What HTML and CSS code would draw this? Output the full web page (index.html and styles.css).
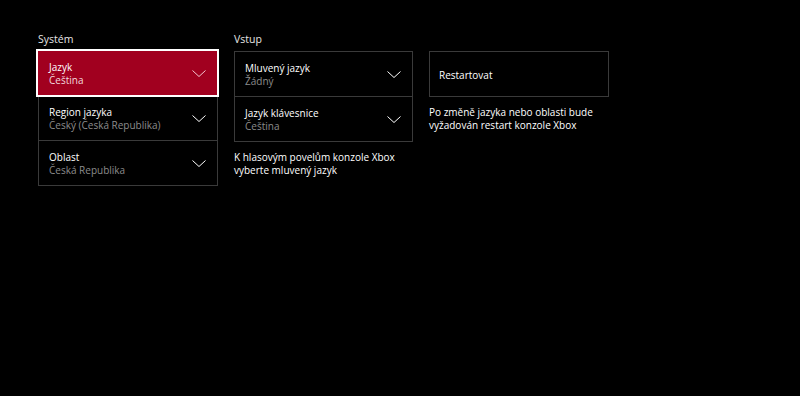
FILE: index.html
```html
<!DOCTYPE html>
<html lang="cs">
<head>
    <meta charset="UTF-8">
    <meta name="viewport" content="width=device-width, initial-scale=1.0">
    <title>Jazyk a oblast</title>
    <link rel="stylesheet" href="styles.css">
</head>
<body>
    <div class="settings">
        <div class="column">
            <h2>Systém</h2>
            <div class="list">
                <div class="item selected">
                    <div class="text">
                        <span class="label">Jazyk</span>
                        <span class="value">Čeština</span>
                    </div>
                    <svg class="chevron" viewBox="0 0 14 7"><path d="M0.5 0.5 L7 6.5 L13.5 0.5"/></svg>
                </div>
                <div class="item">
                    <div class="text">
                        <span class="label">Region jazyka</span>
                        <span class="value">Český (Česká Republika)</span>
                    </div>
                    <svg class="chevron" viewBox="0 0 14 7"><path d="M0.5 0.5 L7 6.5 L13.5 0.5"/></svg>
                </div>
                <div class="item">
                    <div class="text">
                        <span class="label">Oblast</span>
                        <span class="value">Česká Republika</span>
                    </div>
                    <svg class="chevron" viewBox="0 0 14 7"><path d="M0.5 0.5 L7 6.5 L13.5 0.5"/></svg>
                </div>
            </div>
        </div>

        <div class="column narrow">
            <h2>Vstup</h2>
            <div class="list">
                <div class="item">
                    <div class="text">
                        <span class="label">Mluvený jazyk</span>
                        <span class="value">Žádný</span>
                    </div>
                    <svg class="chevron" viewBox="0 0 14 7"><path d="M0.5 0.5 L7 6.5 L13.5 0.5"/></svg>
                </div>
                <div class="item">
                    <div class="text">
                        <span class="label">Jazyk klávesnice</span>
                        <span class="value">Čeština</span>
                    </div>
                    <svg class="chevron" viewBox="0 0 14 7"><path d="M0.5 0.5 L7 6.5 L13.5 0.5"/></svg>
                </div>
            </div>
            <p class="hint">K hlasovým povelům konzole Xbox vyberte mluvený jazyk</p>
        </div>

        <div class="column">
            <h2>&nbsp;</h2>
            <div class="list">
                <div class="item button">
                    <span class="label">Restartovat</span>
                </div>
            </div>
            <p class="hint">Po změně jazyka nebo oblasti bude vyžadován restart konzole Xbox</p>
        </div>
    </div>
</body>
</html>
```

FILE: styles.css
```css
body {
    margin: 0;
    background: #000;
    color: #fff;
    font-family: "Open Sans", "Noto Sans", sans-serif;
    font-size: 10px;
    height: 100vh;
}
.settings {
    display: flex;
    gap: 16px;
    padding: 33px 0 0 38px;
}
.column {
    width: 180px;
}
.column.narrow {
    width: 179px;
}
h2 {
    font-size: 10.5px;
    font-weight: normal;
    margin: 0 0 5px 0;
    line-height: 13px;
    color: #e6e6e6;
}
.list {
    display: flex;
    flex-direction: column;
    margin-top: 4px;
}
.item {
    box-sizing: border-box;
    height: 46px;
    border: 1px solid #3a3a3a;
    padding: 0 10px;
    display: flex;
    align-items: center;
    justify-content: space-between;
}
.item + .item {
    margin-top: -1px;
}
.item.selected {
    background: #a1001f;
    border: 2px solid #fff;
    margin: -2px -1px -1px -2px;
    padding-left: 11px;
    height: 48px;
    position: relative;
}
.text {
    display: flex;
    flex-direction: column;
    line-height: 13px;
    padding-top: 1px;
}
.label {
    color: #fff;
}
.value {
    color: #8c8c8c;
}
.selected .value {
    color: #f2d9de;
}
.chevron {
    width: 14px;
    height: 7px;
    margin-right: 1px;
    fill: none;
    stroke: #fff;
    stroke-width: 1;
}
.selected .chevron {
    stroke: #f4c6d0;
}
.button {
    padding: 2px 9px 0;
}
.hint {
    margin: 9px 0 0 0;
    line-height: 13px;
    color: #fff;
}
```
